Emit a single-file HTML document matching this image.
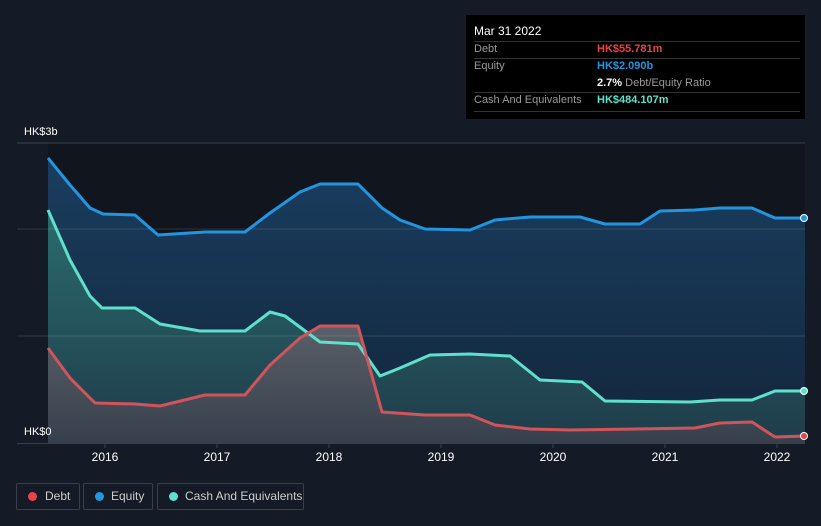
<html><body style="margin:0;background:#151b26;width:821px;height:526px;overflow:hidden;font-family:'Liberation Sans',sans-serif">
<svg width="821" height="526" style="position:absolute;left:0;top:0">
<defs>
<linearGradient id="ge" x1="0" y1="0" x2="0" y2="1"><stop offset="0" stop-color="#1a3d5f"/><stop offset="1" stop-color="#12263b"/></linearGradient>
<linearGradient id="gc" x1="0" y1="0" x2="0" y2="1"><stop offset="0" stop-color="#2a6b6e"/><stop offset="1" stop-color="#1f3c4a"/></linearGradient>
<linearGradient id="gd" x1="0" y1="0" x2="0" y2="1"><stop offset="0" stop-color="#5a5f68"/><stop offset="1" stop-color="#36404c"/></linearGradient>
</defs>
<rect x="48" y="143" width="757" height="300" fill="#11161e"/>
<path d="M48,158 L70,185 L90,208 L103,214 L135,215 L158,235 L205,232 L245,232 L270,213 L300,192 L320,184 L358,184 L382,208 L400,220 L425,229 L470,230 L495,220 L530,217 L580,217 L605,224 L640,224 L660,211 L695,210 L720,208 L752,208 L775,218 L805,218 L805,443 L48,443Z" fill="url(#ge)"/>
<path d="M48,210 L70,260 L90,296 L102,308 L135,308 L160,324 L200,331 L245,331 L270,312 L285,316 L320,342 L358,344 L380,376 L400,368 L430,355 L470,354 L510,356 L540,380 L582,382 L605,401 L690,402 L720,400 L752,400 L775,391 L805,391 L805,443 L48,443Z" fill="url(#gc)"/>
<path d="M48,348 L70,378 L95,403 L135,404 L160,406 L205,395 L245,395 L270,365 L300,338 L320,326 L358,326 L382,412 L425,415 L470,415 L495,425 L530,429 L570,430 L695,428 L720,423 L752,422 L775,437 L805,436 L805,443 L48,443Z" fill="url(#gd)"/>
<g stroke="#ffffff" stroke-opacity="0.12"><line x1="17" y1="229" x2="805" y2="229"/><line x1="17" y1="336" x2="805" y2="336"/></g>
<line x1="17" y1="143" x2="805" y2="143" stroke="#3a404a"/>
<line x1="17" y1="443.5" x2="805" y2="443.5" stroke="#3a404a"/>
<g fill="none" stroke-width="3" stroke-linejoin="round">
<path d="M48,158 L70,185 L90,208 L103,214 L135,215 L158,235 L205,232 L245,232 L270,213 L300,192 L320,184 L358,184 L382,208 L400,220 L425,229 L470,230 L495,220 L530,217 L580,217 L605,224 L640,224 L660,211 L695,210 L720,208 L752,208 L775,218 L805,218" stroke="#2394df"/>
<path d="M48,210 L70,260 L90,296 L102,308 L135,308 L160,324 L200,331 L245,331 L270,312 L285,316 L320,342 L358,344 L380,376 L400,368 L430,355 L470,354 L510,356 L540,380 L582,382 L605,401 L690,402 L720,400 L752,400 L775,391 L805,391" stroke="#5fe0cc"/>
<path d="M48,348 L70,378 L95,403 L135,404 L160,406 L205,395 L245,395 L270,365 L300,338 L320,326 L358,326 L382,412 L425,415 L470,415 L495,425 L530,429 L570,430 L695,428 L720,423 L752,422 L775,437 L805,436" stroke="#d0545a"/>
</g>
<circle cx="804" cy="218" r="3.5" fill="#2394df" stroke="#fff" stroke-width="1"/>
<circle cx="804" cy="391" r="3.5" fill="#5fe0cc" stroke="#fff" stroke-width="1"/>
<circle cx="804" cy="436" r="3.5" fill="#e0474c" stroke="#fff" stroke-width="1"/>
<g stroke="#3a404a"><line x1="105" y1="443" x2="105" y2="448"/><line x1="217" y1="443" x2="217" y2="448"/><line x1="329" y1="443" x2="329" y2="448"/><line x1="441" y1="443" x2="441" y2="448"/><line x1="553" y1="443" x2="553" y2="448"/><line x1="665" y1="443" x2="665" y2="448"/><line x1="777" y1="443" x2="777" y2="448"/></g>
<g fill="#fff" font-size="12" text-anchor="middle"><text x="105" y="461">2016</text><text x="217" y="461">2017</text><text x="329" y="461">2018</text><text x="441" y="461">2019</text><text x="553" y="461">2020</text><text x="665" y="461">2021</text><text x="777" y="461">2022</text></g>
<text x="24" y="135" fill="#fff" font-size="11">HK$3b</text>
<text x="24" y="435" fill="#fff" font-size="11">HK$0</text>
</svg>
<div style="position:absolute;left:466px;top:15px;width:339px;height:104px;background:#000;font-size:11px;color:#999">
<div style="position:absolute;left:8px;top:9px;color:#fff;font-size:12px">Mar 31 2022</div>
<div style="position:absolute;left:8px;right:5px;top:26px;border-top:1px solid #333"></div>
<div style="position:absolute;left:8px;top:28px">Debt</div><div style="position:absolute;left:131px;top:28px;color:#e8444a;font-weight:bold">HK$55.781m</div>
<div style="position:absolute;left:8px;right:5px;top:43px;border-top:1px solid #333"></div>
<div style="position:absolute;left:8px;top:45px">Equity</div><div style="position:absolute;left:131px;top:45px;color:#2394df;font-weight:bold">HK$2.090b</div>
<div style="position:absolute;left:131px;top:62px"><b style="color:#fff">2.7%</b> Debt/Equity Ratio</div>
<div style="position:absolute;left:8px;right:5px;top:77px;border-top:1px solid #333"></div>
<div style="position:absolute;left:8px;top:79px">Cash And Equivalents</div><div style="position:absolute;left:131px;top:79px;color:#5fe0cc;font-weight:bold">HK$484.107m</div>
<div style="position:absolute;left:8px;right:5px;top:96px;border-top:1px solid #333"></div>
</div>
<div style="position:absolute;top:483px;left:16px;height:26px;font-size:12px;color:#ccc">
<div style="position:absolute;left:0;width:62px;height:25px;border:1px solid #3a404a;border-radius:2px"><span style="position:absolute;left:11px;top:8px;width:9px;height:9px;border-radius:50%;background:#e8444a"></span><span style="position:absolute;left:28px;top:5px">Debt</span></div>
<div style="position:absolute;left:67px;width:68px;height:25px;border:1px solid #3a404a;border-radius:2px"><span style="position:absolute;left:11px;top:8px;width:9px;height:9px;border-radius:50%;background:#2394df"></span><span style="position:absolute;left:27px;top:5px">Equity</span></div>
<div style="position:absolute;left:141px;width:145px;height:25px;border:1px solid #3a404a;border-radius:2px"><span style="position:absolute;left:11px;top:8px;width:9px;height:9px;border-radius:50%;background:#5fe0cc"></span><span style="position:absolute;left:27px;top:5px">Cash And Equivalents</span></div>
</div>
</body></html>
